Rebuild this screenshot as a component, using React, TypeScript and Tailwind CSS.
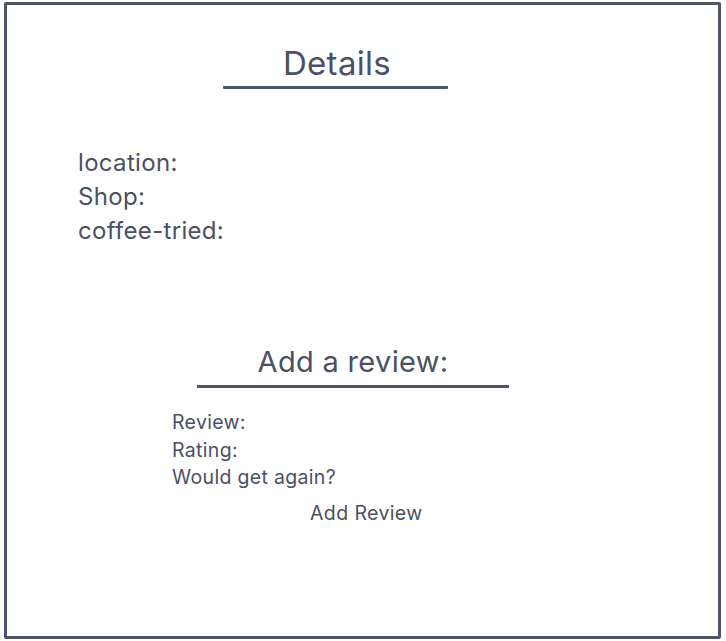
export default function App() {
  const font = { fontFamily: 'Inter, "Noto Sans", sans-serif' };
  return (
    <div className="w-[726px] h-[641px] bg-white pt-[2px] pl-[4px]" style={font}>
      <div className="w-[717px] h-[637px] border-[3px] border-[#4f5468] rounded-[2px] flex flex-col text-[#4b5064] tracking-[0.02em]">
        <div className="mt-[38px] ml-[216px] w-[225px] pb-[3px] border-b-[3px] border-[#4f5468] rounded-b-[1px]">
          <h1 className="text-[33px] leading-[40px] text-center pl-[3px]">Details</h1>
        </div>
        <div className="mt-[57px] ml-[71px] flex flex-col text-[24px] leading-[34px]">
          <span>location:</span>
          <span>Shop:</span>
          <span>coffee-tried:</span>
        </div>
        <div className="mt-[96px] ml-[190px] w-[312px] pb-[5px] border-b-[3px] border-[#4f5468]">
          <h2 className="text-[29px] leading-[36px] text-center">Add a review:</h2>
        </div>
        <div className="mt-[21px] ml-[165px] flex flex-col text-[19.5px] leading-[27.5px]">
          <span>Review:</span>
          <span>Rating:</span>
          <span>Would get again?</span>
        </div>
        <button className="self-start mt-[8px] ml-[303px] text-[19.5px] leading-[27.5px] tracking-[0.02em] text-[#4b5064]">Add Review</button>
      </div>
    </div>
  );
}
